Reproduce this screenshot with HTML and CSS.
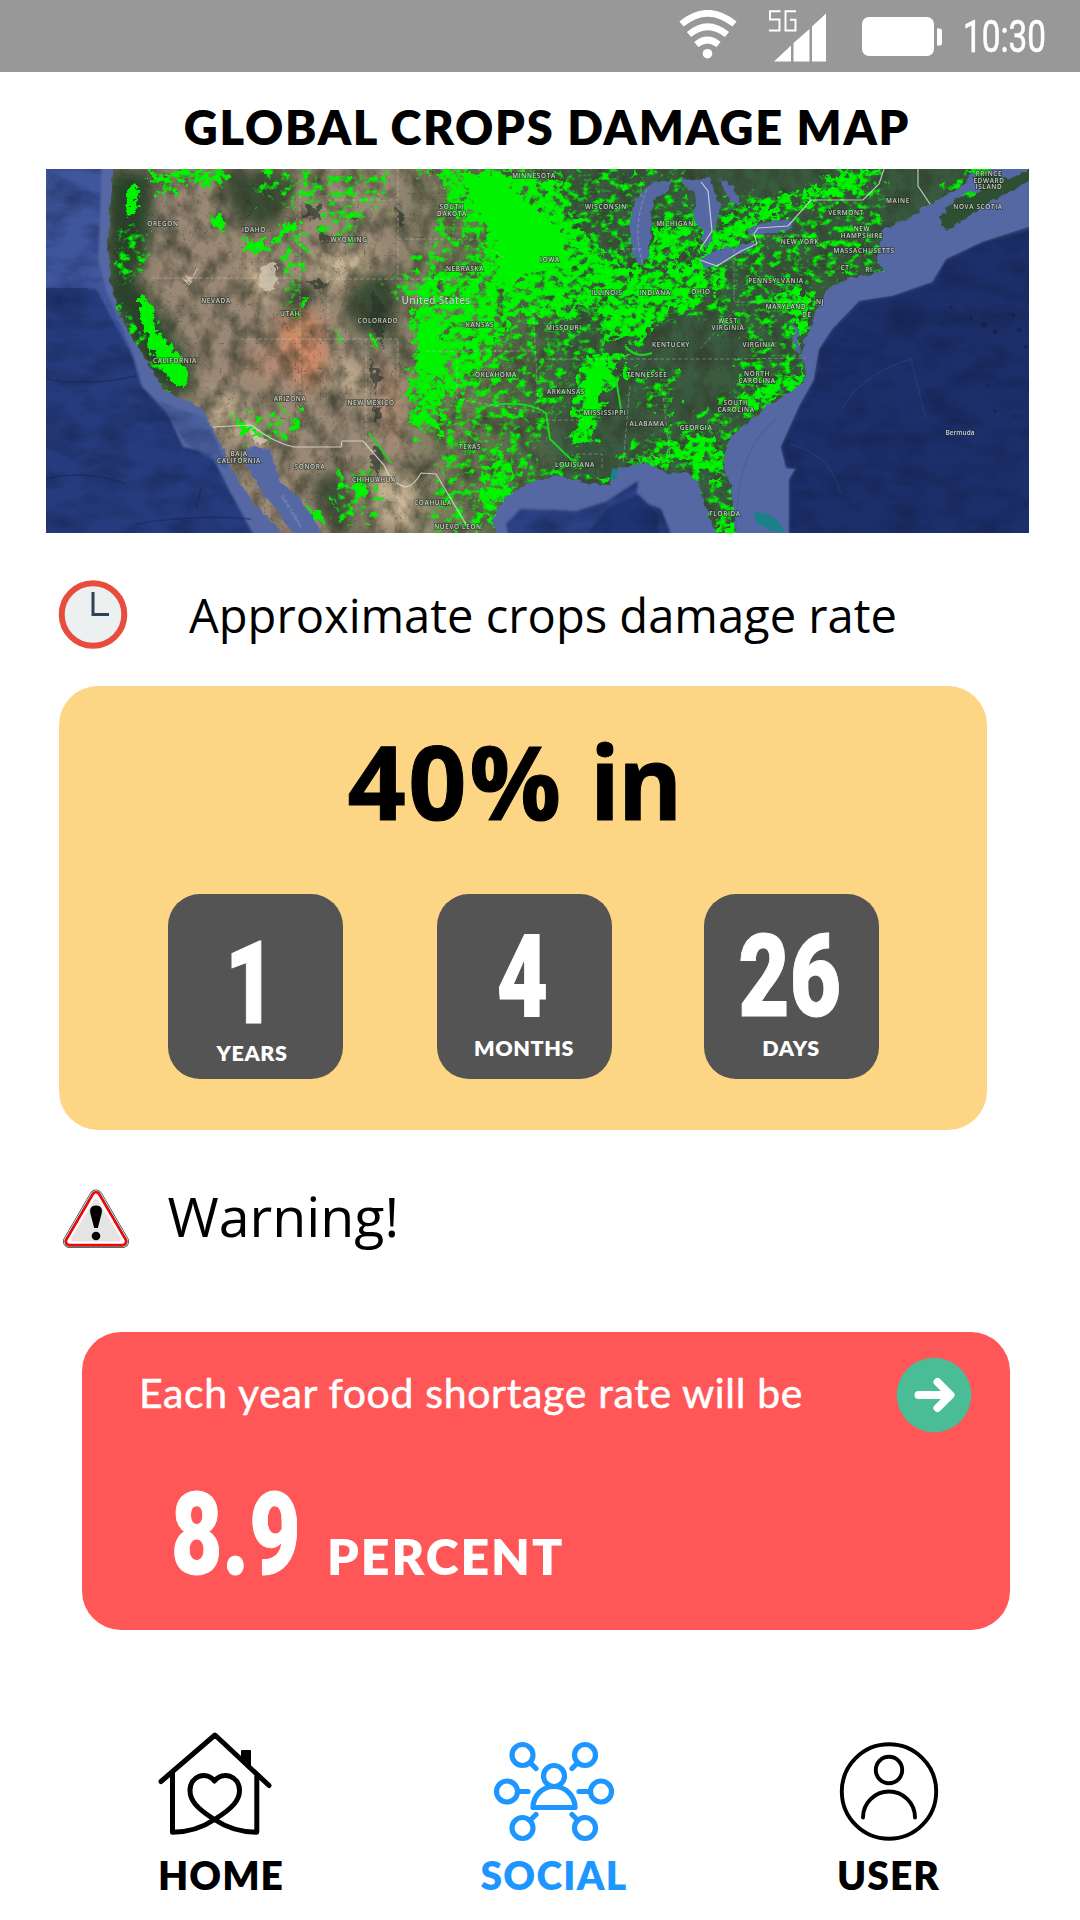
FILE: index.html
```html
<!DOCTYPE html>
<html lang="en">
<head>
<meta charset="utf-8">
<title>Global Crops Damage Map</title>
<link rel="stylesheet" href="styles.css">
</head>
<body>
<div class="status-bar">
  <svg class="wifi" width="58" height="50" viewBox="0 0 58 50" fill="none" stroke="#fff" stroke-width="6.6">
    <path d="M2.5 14Q28.500-7.500 55.500 14"/><path d="M10 24.500Q28.500 9 48 24.500"/><path d="M17.300 34.500Q28.500 25.500 39.500 34.500"/>
    <circle cx="28.500" cy="43.700" r="4.800" fill="#fff" stroke="none"/>
  </svg>
  <svg class="signal" width="58" height="54" viewBox="0 0 58 54">
    <g fill="none" stroke="#fff" stroke-width="1.900"><path d="M12.500 2.200H2V10.500H11.500V21.500H1"/><path d="M28 2.200H17.500V21.500H27.500V10.800H22"/></g>
    <path fill="#fff" d="M6 52.500 23 36.500V52.500ZM25.500 52.500V34L41.500 20V52.500ZM44 52.500V17.500L58 4.500V52.500Z"/>
  </svg>
  <svg class="battery" width="80" height="40" viewBox="0 0 80 40" fill="#fff"><rect width="72" height="39" rx="7"/><path d="M75 11.500H78Q80 11.500 80 14V26Q80 28.500 78 28.500H75Z"/></svg>
  <span class="time">10:30</span>
</div>

<h1 class="title">GLOBAL CROPS DAMAGE MAP</h1>

<svg class="map" width="983" height="364" viewBox="0 0 983 364">
  <defs>
    <filter id="terrain" x="0" y="0" width="100%" height="100%" color-interpolation-filters="sRGB">
      <feTurbulence type="fractalNoise" baseFrequency=".06 .045" numOctaves="5" seed="7" result="n"/>
      <feColorMatrix in="n" values="0 0 0 0 .2  0 0 0 0 .22  0 0 0 0 .16  1.500 0 0 0 -.56" result="d"/>
      <feComposite in="d" in2="SourceAlpha" operator="in" result="dd"/>
      <feTurbulence type="turbulence" baseFrequency=".08" numOctaves="4" seed="4" result="t"/>
      <feColorMatrix in="t" values="0 0 0 0 .16  0 0 0 0 .17  0 0 0 0 .12  -4 0 0 0 .5" result="ridge"/>
      <feMerge><feMergeNode in="SourceGraphic"/><feMergeNode in="dd"/><feMergeNode in="ridge"/></feMerge>
    </filter>
    <filter id="seabed" x="0" y="0" width="100%" height="100%" color-interpolation-filters="sRGB">
      <feGaussianBlur in="SourceGraphic" stdDeviation="1.200" result="g"/>
      <feTurbulence type="fractalNoise" baseFrequency=".025 .05" numOctaves="4" seed="3"/>
      <feColorMatrix values="0 0 0 0 .06  0 0 0 0 .11  0 0 0 0 .25  1 0 0 0 -.4" result="d"/>
      <feComposite in="d" in2="g" operator="in" result="dd"/>
      <feMerge><feMergeNode in="g"/><feMergeNode in="dd"/></feMerge>
    </filter>
    <filter id="coast" x="-5%" y="-5%" width="110%" height="110%">
      <feTurbulence type="fractalNoise" baseFrequency=".12" numOctaves="2" result="n"/>
      <feDisplacementMap in="SourceGraphic" in2="n" scale="7" xChannelSelector="R" yChannelSelector="G"/>
    </filter>
    <filter id="dense" x="-5%" y="-5%" width="110%" height="110%" color-interpolation-filters="sRGB">
      <feTurbulence type="fractalNoise" baseFrequency=".09" numOctaves="4" seed="11" result="n"/>
      <feDisplacementMap in="SourceGraphic" in2="n" scale="36" xChannelSelector="R" yChannelSelector="G" result="s"/>
      <feTurbulence type="fractalNoise" baseFrequency=".12 .15" numOctaves="4" seed="5" result="t"/>
      <feColorMatrix in="t" values="0 0 0 0 0  0 0 0 0 1  0 0 0 0 0  6 0 0 0 -2.050" result="m"/>
      <feComposite in="s" in2="m" operator="in"/>
      <feGaussianBlur stdDeviation=".6"/>
    </filter>
    <filter id="solid" x="-10%" y="-10%" width="120%" height="120%">
      <feTurbulence type="fractalNoise" baseFrequency=".14" numOctaves="3" seed="8" result="n"/>
      <feDisplacementMap in="SourceGraphic" in2="n" scale="14" xChannelSelector="R" yChannelSelector="G"/>
      <feGaussianBlur stdDeviation=".5"/>
    </filter>
    <filter id="sparse" x="-5%" y="-5%" width="110%" height="110%" color-interpolation-filters="sRGB">
      <feTurbulence type="fractalNoise" baseFrequency=".075" numOctaves="4" seed="21" result="n"/>
      <feDisplacementMap in="SourceGraphic" in2="n" scale="34" xChannelSelector="R" yChannelSelector="G" result="s"/>
      <feTurbulence type="fractalNoise" baseFrequency=".11 .14" numOctaves="5" seed="2" result="t"/>
      <feColorMatrix in="t" values="0 0 0 0 0  0 0 0 0 1  0 0 0 0 0  4.500 0 0 0 -2.200" result="m"/>
      <feComposite in="s" in2="m" operator="in"/>
      <feGaussianBlur stdDeviation=".6"/>
    </filter>
    <filter id="soft" x="-20%" y="-20%" width="140%" height="140%"><feGaussianBlur stdDeviation="8"/></filter>
    <linearGradient id="east" x1="0" x2="1" y1="0" y2="0">
      <stop offset="0" stop-color="#9a8775"/><stop offset=".34" stop-color="#9a8975"/><stop offset=".44" stop-color="#6c7454"/><stop offset=".54" stop-color="#3b5b40"/><stop offset="1" stop-color="#37593e"/>
    </linearGradient>
  </defs>

  <!-- land -->
  <g filter="url(#terrain)">
    <rect width="983" height="364" fill="url(#east)"/>
    <g filter="url(#soft)">
      <path fill="#27452b" d="M60 0H108L105 70 90 110 118 150 145 200 150 228 110 222 60 130Z"/>
      <path fill="#3b4d34" d="M170 0H250L235 60 190 55ZM295 95 355 110 345 175 305 160ZM240 120 265 115 255 170 235 165ZM265 305 300 310 310 364 285 364Z"/>
      <path fill="#cdb797" d="M155 215 205 245 225 275 180 262ZM265 85 330 80 305 115 265 110ZM290 180 325 215 300 225ZM330 290 365 320 385 364 330 350ZM200 95 230 90 225 130 208 135Z"/>
      <path fill="#d08a68" d="M235 150 275 145 282 195 262 225 230 190Z"/>
      <path fill="#b08a73" d="M328 190 358 210 355 300 338 260ZM190 180 235 180 240 215 200 205Z"/>
    </g>
  </g>
  <path filter="url(#solid)" fill="#d8cbb7" opacity=".75" d="M212 102 233 92 229 118 218 126ZM142 108 152 98 138 122ZM200 258 224 272 212 276Z"/>
  <path filter="url(#solid)" fill="#26352a" opacity=".65" d="M261 36 275 38 270 52 258 47ZM269 58 288 72 280 76ZM300 40 315 52 308 54ZM327 275 337 285 332 306 325 294ZM350 40 360 48 355 60ZM260 112 285 115 275 121ZM323 190 335 205 330 225ZM326 235 336 245 331 260ZM324 120 336 132 338 178 326 158Z"/>

  <!-- crop areas -->
  <g fill="#00f400">
    <g filter="url(#sparse)">
      <path d="M400 0H640V130L560 170 480 300 440 364 380 364 400 270 360 250 372 130 330 120 380 90Z"/>
      <path d="M238 60H258L255 160 238 150ZM275 30H310V70H275ZM72 60H100V110H72ZM215 0H340V35H215ZM285 300H330V350H290ZM60 120 85 150 125 230H110ZM205 240H255V268H205Z"/>
      <path d="M560 100H780L770 140 750 190 760 220 690 270 690 364H660L640 300 575 295 585 268 650 250 690 215 700 165 640 150 560 160Z"/>
      <path d="M640 30 760 20 800 0H840V100L700 120 600 130V20ZM590 200H630V240H590ZM910 0H975L920 35H895Z"/>
      <path d="M440 250 470 300 530 290 560 316 520 308 450 330ZM185 270 260 350 280 364 265 364Z"/>
    </g>
    <g filter="url(#dense)">
      <path d="M364 0H480L520 30 535 65 580 100 600 105 660 90 680 110 640 140 605 150 600 175 560 170 550 135 500 150 470 140 445 190 425 215 385 225 390 262 365 260 368 195 375 160 360 150 380 110 430 105 435 75 405 45 400 10Z"/>
      <path d="M400 8H470L525 60 560 110 520 120 470 135 450 140 435 100 445 80 410 40Z"/>
      <path d="M535 190 560 185 580 180 575 215 555 225 550 265 530 280 525 265 535 250 528 230Z"/>
      <path d="M650 90 668 65 680 48 705 45 740 30 770 20 785 8 810 0 830 5 800 28 755 35 720 50 690 80 655 93Z"/>
      <path d="M620 55 650 50 655 80 640 82 625 95 600 90 610 60ZM465 0 510 10 520 25 480 20Z"/>
      <path d="M100 0H185L180 15 158 17 145 12 125 24 108 20ZM580 295 620 285 640 265 665 270 680 290 670 315 650 295 620 295ZM728 130 765 120 760 160 752 170 745 150ZM735 205 765 200 755 220 700 240 695 230ZM440 305 455 275 470 310 450 355 430 345ZM675 350 690 340 695 360 670 364ZM380 185 400 190 395 265 368 260Z"/>
    </g>
    <g filter="url(#solid)">
      <path d="M82 18H93L91 38 82 50ZM94 123 106 137 113 163 128 180 142 202 141 218 127 216 107 185 94 150ZM164 43 176 50 181 64 170 60ZM197 71 218 72 222 81 201 82ZM226 70 240 55 252 50 254 57 240 65 230 75ZM186 245 196 255 207 259 197 268 191 258ZM262 337 275 343 280 356 266 350ZM312 308 322 320 318 330 307 320ZM245 246 252 250 248 256ZM287 158 298 171 292 173ZM325 165 332 171 328 180Z"/>
      <path d="M420 5H455L470 25 515 60 520 95 475 105 465 115 450 100 455 75 425 35ZM372 155H395V208L372 200ZM550 190 562 183 560 205 552 225 542 262 533 262 538 235 536 215Z"/>
    </g>
    <path fill="none" stroke="#18d51f" stroke-width="2" d="M440 237Q480 230 500 244L504 270 535 300M579 177Q590 190 606 184M570 210 575 240M323 264 345 294"/>
  </g>

  <!-- seas and lakes -->
  <g filter="url(#coast)" fill="#5468a4">
    <path d="M-10-10H68L62 71 64 114 74 148 94 181 117 221 137 229 157 241 169 264 187 301 207 334 234 361 250 375H-10Z"/>
    <path d="M201 278 224 281 234 311 261 338 283 375H253L235 345 211 318 199 292Z"/>
    <path d="M451 375 447 348 461 328 484 314 511 306 537 314 564 316 571 299 601 294 624 306 641 303 654 315 660 340 673 375Z"/>
    <path d="M691 375 687 328 677 291 684 268 707 248 724 236 757 214 761 204 754 184 771 141 782 118 804 109 839 103 831 91 836 61 867 46 884 34 914 19 921 11 931-10H995V375Z"/>
    <path d="M624 11 607 14 591 28 584 51 586 84 594 97 604 84 606 54 607 31 624 21ZM634 11 664 9 674 38 667 64 661 81 655 58 647 48 651 28ZM674 11 687 18 696 38 684 31ZM654 91 671 81 694 76 714 73 697 84 671 96 657 99ZM701 63 711 54 747 51 744 61 714 66ZM747 150 752 165 753 188 749 180Z"/>
  </g>
  <path filter="url(#coast)" fill="#2d4f32" d="M990 8 947 31 921 48 901 63 894 48 911 29 937 21 925 8 940 4 965 10 990-5Z"/>
  <path filter="url(#coast)" fill="#00e800" d="M920 0H945L935 8ZM915 26 930 22 925 28Z"/>
  <g filter="url(#seabed)">
    <path fill="#3f569d" d="M-9-9H56L52 91 61 124 84 178 94 210-9 200Z"/>
    <path fill="#263b7d" d="M-9 120H50L66 150 84 182 96 218 121 244 137 278 165 285 185 325 212 374H-9Z"/>
    <path fill="#465b9b" d="M112 232 160 250 182 300 140 275Z" opacity=".7"/>
    <path fill="#1d2f6a" d="M992 57 937 74 901 91 887 114 847 128 814 133 787 161 774 181 769 211 754 238 736 278 741 298 751 299 744 311V374H992Z"/>
    <path fill="#2b4184" d="M464 374 460 355 475 340 530 342 560 333 592 312 590 330 615 340 628 374Z"/>
    <path fill="#1e3371" d="M535 374 560 340 592 325 612 345 614 374Z"/>
  </g>
  <g fill="none">
    <path stroke="#18264f" stroke-width="2.500" opacity=".45" d="M983 59 937 74 901 91 887 114 847 128 814 133 787 161 774 181 769 211 754 238 736 278 741 298 751 299 744 311V364"/>
    <path stroke="#16244e" stroke-width="1.500" opacity=".5" d="M0 120 42 120M0 210Q40 218 90 207M0 310Q40 300 80 315M90 355Q150 345 205 350M155 320 150 340"/>
    <path stroke="#35508c" stroke-width="1.500" opacity=".3" d="M796 240Q815 205 865 190L880 250M744 275Q785 285 795 325M690 364Q690 280 730 250"/>
  </g>
  <path fill="#1b8088" d="M708 343Q735 345 738 364L724 361 710 354ZM566 300 572 299 570 310 564 312Z"/>
  <g fill="#101c43" opacity=".55"><circle cx="905" cy="138" r="1.500"/><circle cx="925" cy="149" r="2"/><circle cx="938" cy="156" r="2.500"/><circle cx="949" cy="163" r="2.500"/><circle cx="967" cy="146" r="2"/><circle cx="973" cy="161" r="2.500"/><circle cx="980" cy="178" r="2"/><circle cx="942" cy="216" r="1.500"/><circle cx="949" cy="242" r="1.500"/><circle cx="970" cy="247" r="1.500"/></g>

  <!-- borders -->
  <g fill="none" stroke="#dde2dc" stroke-width="1.200" opacity=".8">
    <path d="M167 258 205 256 Q228 274 248 278H295L296 272H317L338 296Q345 315 360 318Q368 317 375 304L390 305 408 335 421 357"/>
    <path d="M655 13 662 22 666 62 654 80M654 91 671 97 695 82 711 75 708 65 712 59 742 57 765 31 817 31 833 15 838 0M872 0 872 17 884 35"/>
  </g>
  <g fill="none" stroke="#d5d9cf" stroke-width=".7" stroke-dasharray="4 2" opacity=".5">
    <path d="M352 0V110H282V170H352V215M352 70H430L460 90M352 110H430L455 140M320 170V280M282 31H352M254 20V109H105M254 109V230M282 170H195M380 182H487M411 185V230L460 238 498 244M487 140 490 190 492 240M488 190H560M500 251H538M530 285H556V300M584 217 577 295M616 217 624 288 580 290M560 190 680 190 760 189M595 28V10M596 80H570M688 80V133H770M780 80 762 67H690M654 180 690 140"/>
    <path d="M601 20Q585 60 597 95"/>
  </g>

  <!-- place names -->
  <g class="labels">
    <text x="117" y="54">OREGON</text><text x="208" y="60">IDAHO</text><text x="303" y="70">WYOMING</text><text x="170" y="131">NEVADA</text><text x="244" y="144">UTAH</text><text x="332" y="151">COLORADO</text><text x="129" y="191">CALIFORNIA</text><text x="244" y="229">ARIZONA</text><text x="325" y="233">NEW MEXICO</text><text x="193" y="284">BAJA</text><text x="193" y="291.500">CALIFORNIA</text><text x="264" y="297">SONORA</text><text x="328" y="310">CHIHUAHUA</text>
    <text x="488" y="6">MINNESOTA</text><text x="406" y="37">SOUTH</text><text x="406" y="44">DAKOTA</text><text x="419" y="99">NEBRASKA</text><text x="434" y="155">KANSAS</text><text x="518" y="158">MISSOURI</text><text x="560" y="37">WISCONSIN</text><text x="629" y="54">MICHIGAN</text><text x="504" y="90">IOWA</text><text x="561" y="123">ILLINOIS</text><text x="609" y="123">INDIANA</text><text x="655" y="122">OHIO</text><text x="625" y="175">KENTUCKY</text><text x="601" y="205">TENNESSEE</text><text x="450" y="205">OKLAHOMA</text><text x="520" y="222">ARKANSAS</text><text x="559" y="243">MISSISSIPPI</text><text x="601" y="254">ALABAMA</text><text x="650" y="258">GEORGIA</text><text x="424" y="277">TEXAS</text><text x="529" y="295">LOUISIANA</text><text x="387" y="333">COAHUILA</text><text x="412" y="357">NUEVO LEON</text>
    <text x="943" y="4">PRINCE</text><text x="943" y="11">EDWARD</text><text x="943" y="17.500">ISLAND</text><text x="932" y="37">NOVA SCOTIA</text><text x="852" y="31">MAINE</text><text x="800" y="43">VERMONT</text><text x="816" y="59">NEW</text><text x="816" y="66">HAMPSHIRE</text><text x="818" y="81">MASSACHUSETTS</text><text x="799" y="98">CT</text><text x="823" y="100">RI</text><text x="754" y="72">NEW YORK</text><text x="730" y="111">PENNSYLVANIA</text><text x="740" y="137">MARYLAND</text><text x="774" y="132">NJ</text><text x="761" y="145">DE</text><text x="682" y="151">WEST</text><text x="682" y="158">VIRGINIA</text><text x="713" y="175">VIRGINIA</text><text x="711" y="204">NORTH</text><text x="711" y="211">CAROLINA</text><text x="690" y="233">SOUTH</text><text x="690" y="240">CAROLINA</text><text x="679" y="344">FLORIDA</text>
    <text class="country" x="390" y="131">United States</text><text class="island" x="914" y="263">Bermuda</text>
    <text class="water" transform="translate(246 342) rotate(58)">Gulf of California</text>
  </g>
</svg>

<div class="rate-row">
  <svg width="70" height="70" viewBox="0 0 70 70"><circle cx="35" cy="34.500" r="31.300" fill="#ecf0f1" stroke="#e84c3d" stroke-width="6"/><path fill="none" stroke="#2f4154" stroke-width="3" d="M35 12V34.500H51"/></svg>
  <span>Approximate crops damage rate</span>
</div>

<section class="countdown">
  <h2><span class="rate">40%</span><span class="in">in</span></h2>
  <div class="tiles">
    <div class="tile low"><b class="num">1</b><span>YEARS</span></div>
    <div class="tile"><b class="num">4</b><span>MONTHS</span></div>
    <div class="tile"><b class="num">26</b><span>DAYS</span></div>
  </div>
</section>

<div class="warning-row">
  <svg width="68" height="62" viewBox="0 0 68 62">
    <g stroke-linejoin="round"><path fill="#333" stroke="#333" stroke-width="13" d="M34 7 60.500 52.500H7.500Z"/><path fill="#fff" stroke="#fff" stroke-width="11.600" d="M34 7 60.500 52.500H7.500Z"/><path stroke="#555" stroke-width="10.400" d="M34 7 60.500 52.500H7.500Z"/><path fill="#f00" stroke="#f00" stroke-width="9.400" d="M34 7 60.500 52.500H7.500Z"/><path fill="#fff" stroke="#fff" stroke-width="4.600" d="M34 7 60.500 52.500H7.500Z"/><path fill="#e4e4e4" stroke="#e4e4e4" stroke-width="5" d="M34 13 56.500 50H11.500Z"/></g>
    <path d="M34 16.500C40 16.500 40.500 21 39.500 25L35.800 39H32.200L28.500 25C27.500 21 28 16.500 34 16.500Z"/><circle cx="34" cy="47" r="4.300"/>
  </svg>
  <span>Warning!</span>
</div>

<section class="shortage">
  <div class="shortage-head">
    <span>Each year food shortage rate will be</span>
    <svg width="76" height="76" viewBox="0 0 76 76"><circle cx="38" cy="38" r="37.300" fill="#4abc96"/><path fill="none" stroke="#fff" stroke-width="8" stroke-linecap="round" stroke-linejoin="round" d="M22.500 38H54M41.500 25 54.500 38 41.500 51"/></svg>
  </div>
  <div class="shortage-value"><b class="num">8.9</b><span>PERCENT</span></div>
</section>

<nav class="tabs">
  <a class="tab home">
    <svg width="120" height="116" viewBox="0 0 120 116" fill="none" stroke="#000" stroke-width="5" stroke-linecap="round" stroke-linejoin="round">
      <path d="M6 54.500 60 8 114 58.500M17.500 46V105.300Q41 105 59.500 92.500C78 81 84.500 73 84.500 63.500C84.500 49 68 43.500 59.500 54C51 43.500 35 49 35 63.500C35 73 41 81 59.500 92.500Q78 105 101.800 105.300V48"/>
      <path fill="#000" stroke-width="2" d="M87 24H95V42L87 34Z"/>
    </svg>
    <span>HOME</span>
  </a>
  <a class="tab social">
    <svg width="124" height="116" viewBox="0 0 124 116" fill="none" stroke="#1e96ff" stroke-width="5.200" stroke-linecap="round" stroke-linejoin="round">
      <circle cx="30.500" cy="28" r="10.500"/><circle cx="93" cy="28" r="10.500"/><circle cx="15" cy="64.500" r="10.500"/><circle cx="109" cy="64.500" r="10.500"/><circle cx="30.500" cy="101" r="10.500"/><circle cx="93" cy="101" r="10.500"/><circle cx="62" cy="49" r="10.500"/>
      <path d="M38.500 36 44 41.500M85.500 36 80 41.500M26 64.500H36M98 64.500H87M38.500 93 44 87.500M85.500 93 80 87.500M41 80.500A21 21 0 0 1 83 80.500Z"/>
    </svg>
    <span>SOCIAL</span>
  </a>
  <a class="tab user">
    <svg width="100" height="116" viewBox="0 0 100 116" fill="none" stroke="#000" stroke-width="3.900" stroke-linecap="round">
      <circle cx="50" cy="64.500" r="47.200"/><circle cx="50" cy="43" r="13.200"/><path d="M24 90.500A26 26 0 0 1 76 90.500"/>
    </svg>
    <span>USER</span>
  </a>
</nav>
</body>
</html>
```
FILE: styles.css
```css
* { box-sizing: border-box; }
body { margin: 0; width: 1080px; height: 1920px; overflow: hidden; background: #fff; color: #000; font-family: Lato, sans-serif; display: flex; flex-direction: column; }
svg { display: block; flex: none; }

.status-bar { height: 72px; background: #989898; color: #fff; display: flex; }
.wifi { margin: 10px 0 0 679px; }
.signal { margin: 8.500px 0 0 31px; }
.battery { margin: 16.500px 0 0 36px; }
.time { margin: 0 0 0 21px; font: 400 45px/74px Roboto, sans-serif; transform: scaleX(.74); transform-origin: left; white-space: nowrap; -webkit-text-stroke: .6px #fff; }

.title { margin: 0; height: 97px; padding: 12px 0 0 14px; text-align: center; font-size: 47px; line-height: 86px; font-weight: 800; letter-spacing: 1.750px; white-space: nowrap; }

.map { margin-left: 46px; background: #233676; }
.labels { font: 600 6.400px "Open Sans", sans-serif; letter-spacing: .65px; fill: #c9cec6; stroke: #222b24aa; stroke-width: 1.600px; paint-order: stroke; text-anchor: middle; dominant-baseline: central; }
.country { font-size: 10px; letter-spacing: .3px; stroke-width: .5px; }
.island { font-size: 6.500px; letter-spacing: 0; stroke-width: .5px; }
.water { font-size: 4.500px; letter-spacing: .1px; font-weight: 400; fill: #8d9cc8; stroke: none; }

.rate-row { height: 153px; padding: 11px 0 0 58px; display: flex; align-items: center; font: 47.100px/60px "Open Sans", sans-serif; }
.rate-row span { margin-left: 61px; white-space: nowrap; }

.countdown { width: 928px; height: 444px; margin-left: 58.500px; padding-top: 44px; border-radius: 39px; background: #fcd684; }
.countdown h2 { margin: 0 0 62px 289px; display: flex; font: 700 102px/102px "Open Sans", sans-serif; white-space: nowrap; }
.rate { letter-spacing: 2.500px; -webkit-text-stroke: 1px #000; }
.in { margin-left: 26px; letter-spacing: -2px; transform: scaleX(.96); transform-origin: left; -webkit-text-stroke: 1px #000; }
.tiles { display: grid; grid-template-columns: 175px 175px 175px; column-gap: 94px; margin-left: 109.500px; }
.tile:last-child { margin-left: -2px; margin-right: 2px; }
.tile { height: 185px; padding-top: 33px; border-radius: 32px; background: #545454; color: #fff; display: flex; flex-direction: column; align-items: center; gap: 10px; }
.tile.low { padding-top: 40px; gap: 8px; padding-right: 6px; }
.num { font: 900 115px/100px Roboto, sans-serif; transform: scaleX(.77); -webkit-text-stroke: 1px #fff; }
.tile span { font-size: 21.500px; line-height: 22px; font-weight: 800; letter-spacing: .6px; margin-left: -1px; }
.tile .num { margin-left: -4px; }

.warning-row { height: 202px; padding: 51px 0 0 62px; display: flex; align-items: flex-start; font: 55.500px/70px "Open Sans", sans-serif; }
.warning-row svg { margin-top: 8px; }
.warning-row span { margin-left: 37.500px; }

.shortage { width: 928px; height: 298px; margin-left: 82px; border-radius: 39px; background: #ff5757; color: #fff; padding: 25px 38px 0 57px; }
.shortage-head { display: flex; justify-content: space-between; align-items: center; font-size: 41px; line-height: 70px; letter-spacing: .65px; white-space: nowrap; height: 76px; }
.shortage-head span { margin-top: -4px; -webkit-text-stroke: .5px #fff; }
.shortage-value { display: flex; padding: 52px 0 0 32px; }
.shortage-value .num { transform-origin: left; width: 125px; }
.shortage-value span { margin: 41px 0 0 31px; font-size: 50px; line-height: 60px; font-weight: 800; letter-spacing: 2px; }

.tabs { display: flex; padding: 97px 0 0 0; }
.tab { display: flex; flex-direction: column; align-items: center; font-size: 39px; line-height: 50px; font-weight: 800; letter-spacing: 1px; width: 160px; }
.tab span { margin-top: 7px; white-space: nowrap; }
.home svg { margin-left: -12px; }
.home { margin-left: 141px; }
.social { margin-left: 173px; color: #1e96ff; }
.social span { letter-spacing: 1.300px; }
.user { margin-left: 174.500px; }
```
